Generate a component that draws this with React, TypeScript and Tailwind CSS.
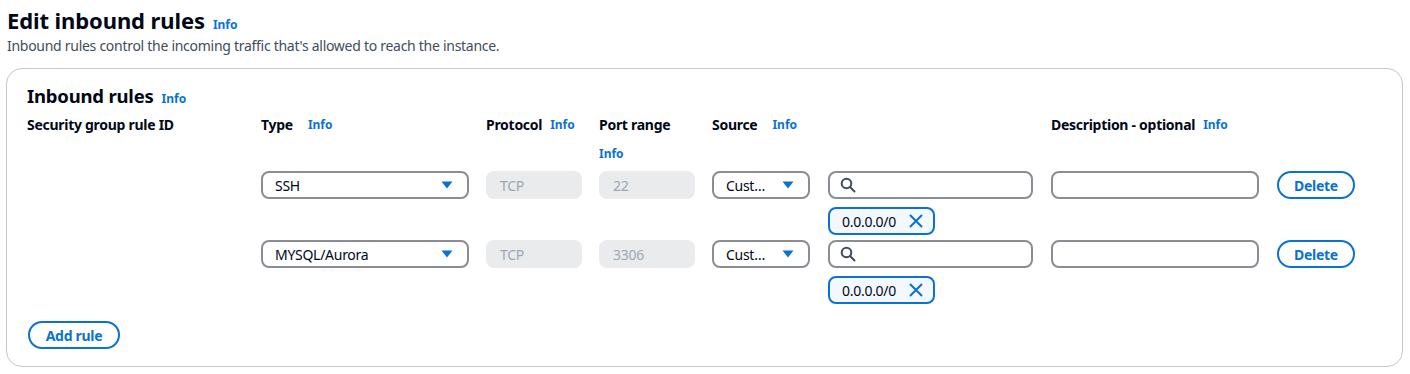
import React from 'react';

const font = { fontFamily: '"Noto Sans", "Open Sans", Arial, sans-serif' };

function InfoLink({ className = '' }: { className?: string }) {
  return <a className={`text-[12px] font-bold text-[#0972d3] leading-none tracking-normal ${className}`}>Info</a>;
}

function Caret() {
  return (
    <svg width="12" height="8" viewBox="0 0 12 8" className="shrink-0">
      <path d="M0.5 0.5 H11.5 L6 7.5 Z" fill="#0972d3" />
    </svg>
  );
}

function SearchIcon() {
  return (
    <svg width="16" height="16" viewBox="0 0 16 16" className="shrink-0">
      <circle cx="6.5" cy="6.5" r="4.8" fill="none" stroke="#414d5c" strokeWidth="2" />
      <path d="M10 10 L14.5 14.5" stroke="#414d5c" strokeWidth="2" strokeLinecap="round" />
    </svg>
  );
}

function XIcon() {
  return (
    <svg width="14" height="14" viewBox="0 0 14 14" className="shrink-0">
      <path d="M1.5 1.5 L12.5 12.5 M12.5 1.5 L1.5 12.5" stroke="#0972d3" strokeWidth="2" strokeLinecap="round" />
    </svg>
  );
}

function Select({ value, width }: { value: string; width: string }) {
  return (
    <div className={`${width} h-[28px] border-2 border-[#8c8c94] rounded-lg flex items-center justify-between pl-[12px] pr-[14px] bg-white`}>
      <span className="text-[14px] text-[#000716] truncate">{value}</span>
      <Caret />
    </div>
  );
}

function Disabled({ value }: { value: string }) {
  return (
    <div className="w-[96px] h-[28px] rounded-lg bg-[#e9ebed] flex items-center px-[14px]">
      <span className="text-[14px] text-[#9ba7b6]">{value}</span>
    </div>
  );
}

function Rule({ type, port }: { type: string; port: string }) {
  return (
    <div className="flex items-start">
      <div className="w-[234px] shrink-0" />
      <div className="w-[225px] shrink-0"><Select value={type} width="w-[208px]" /></div>
      <div className="w-[113px] shrink-0"><Disabled value="TCP" /></div>
      <div className="w-[113px] shrink-0"><Disabled value={port} /></div>
      <div className="w-[116px] shrink-0"><Select value="Cust…" width="w-[98px]" /></div>
      <div className="w-[223px] shrink-0 flex flex-col gap-[8px]">
        <div className="w-[205px] h-[28px] border-2 border-[#8c8c94] rounded-lg flex items-center px-[10px]">
          <SearchIcon />
        </div>
        <div className="w-[107px] h-[28px] border-2 border-[#0972d3] rounded-lg bg-[#f2f8fd] flex items-center justify-between pl-[12px] pr-[10px]">
          <span className="text-[14px] text-[#000716]">0.0.0.0/0</span>
          <XIcon />
        </div>
      </div>
      <div className="w-[226px] shrink-0">
        <div className="w-[208px] h-[28px] border-2 border-[#8c8c94] rounded-lg" />
      </div>
      <button className="w-[78px] h-[28px] rounded-full border-2 border-[#0972d3] text-[14px] font-bold text-[#0972d3] flex items-center justify-center">
        Delete
      </button>
    </div>
  );
}

export default function App() {
  return (
    <div className="w-[1410px] h-[374px] bg-white text-[#000716] tracking-[-0.28px]" style={font}>
      <div className="pl-[7px] pt-[3px]">
        <div className="flex items-baseline gap-[8px]">
          <h1 className="text-[22px] font-bold leading-[34px] tracking-[-0.1px]">Edit inbound rules</h1>
          <InfoLink />
        </div>
        <p className="text-[14px] text-[#414d5c] leading-[20px] mt-[-1px]">
          Inbound rules control the incoming traffic that's allowed to reach the instance.
        </p>
      </div>

      <div className="mx-[6px] mt-[12px] w-[1397px] h-[299px] border border-[#c6c6cd] rounded-2xl pl-[20px] pt-[12px]">
        <div className="flex items-baseline gap-[8px]">
          <h2 className="text-[18.5px] font-bold leading-[29px] tracking-[-0.2px]">Inbound rules</h2>
          <InfoLink />
        </div>

        <div className="flex items-start mt-[5px] text-[14px] font-bold leading-[20px]">
          <div className="w-[234px] shrink-0">Security group rule ID</div>
          <div className="w-[225px] shrink-0 flex items-center gap-[15px]">Type <InfoLink /></div>
          <div className="w-[113px] shrink-0 flex items-center gap-[8px]">Protocol <InfoLink /></div>
          <div className="w-[113px] shrink-0 flex flex-col">
            <span>Port range</span>
            <InfoLink className="mt-[13px]" />
          </div>
          <div className="w-[116px] shrink-0 flex items-center gap-[15px]">Source <InfoLink /></div>
          <div className="w-[223px] shrink-0" />
          <div className="flex items-center gap-[8px]">Description - optional <InfoLink /></div>
        </div>

        <div className="mt-[11px] flex flex-col gap-[5px]">
          <Rule type="SSH" port="22" />
          <Rule type="MYSQL/Aurora" port="3306" />
        </div>

        <button className="mt-[17px] ml-[1px] w-[92px] h-[28px] rounded-full border-2 border-[#0972d3] text-[14px] font-bold text-[#0972d3] flex items-center justify-center">
          Add rule
        </button>
      </div>
    </div>
  );
}
